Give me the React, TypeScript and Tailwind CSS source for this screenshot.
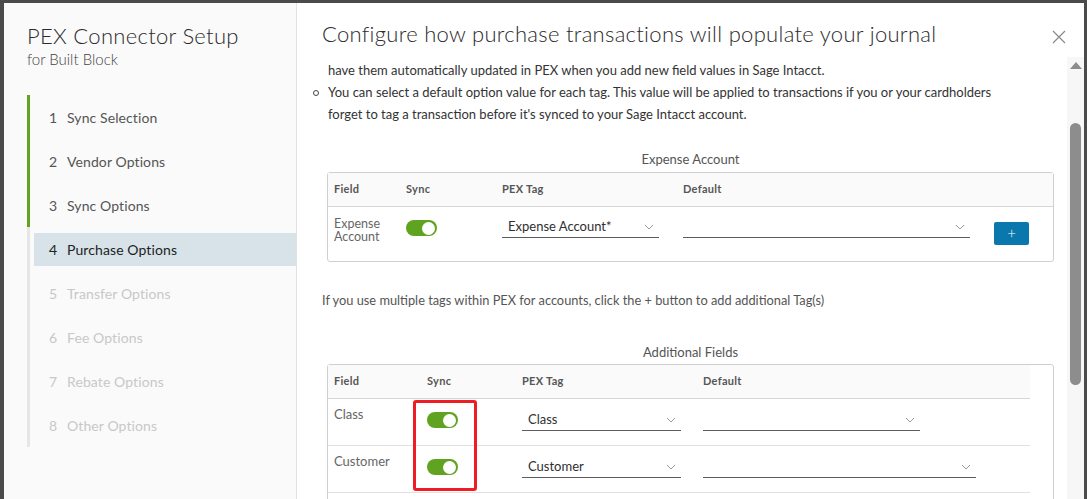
import React from "react";

const steps = [
  { n: 1, label: "Sync Selection", state: "done" },
  { n: 2, label: "Vendor Options", state: "done" },
  { n: 3, label: "Sync Options", state: "done" },
  { n: 4, label: "Purchase Options", state: "active" },
  { n: 5, label: "Transfer Options", state: "todo" },
  { n: 6, label: "Fee Options", state: "todo" },
  { n: 7, label: "Rebate Options", state: "todo" },
  { n: 8, label: "Other Options", state: "todo" },
];

function Chevron() {
  return (
    <svg width="10" height="6" viewBox="0 0 10 6" className="shrink-0">
      <polyline points="1,1 5,5 9,1" fill="none" stroke="#9a9a9a" strokeWidth="1" />
    </svg>
  );
}

function Toggle() {
  return (
    <div className="w-[31px] h-[16px] rounded-full bg-[#5fa321] flex items-center justify-end pr-[2px]">
      <div className="w-[13px] h-[13px] rounded-full bg-white" />
    </div>
  );
}

function Select({ value, w }: { value: string; w: string }) {
  return (
    <div className={`${w} h-[22px] border-b border-[#5c5c5c] flex items-center justify-between pl-[6px] pr-[5px]`}>
      <span className="text-[13px] text-[#2f2f2f] leading-none">{value}</span>
      <Chevron />
    </div>
  );
}

export default function App() {
  return (
    <div className="w-[1087px] h-[499px] bg-[#4b4b4b] pt-[3px] pl-[4px] pr-[3px] overflow-hidden font-['Lato',sans-serif]">
      <div className="flex h-[520px] bg-white">
        {/* Left panel */}
        <aside className="w-[293px] shrink-0 bg-[#fafafa] border-r border-[#e2e2e2] pl-[23px] pt-[20px]">
          <div className="text-[22px] leading-[26px] tracking-[0.3px] text-[#2b2b2b] font-light">PEX Connector Setup</div>
          <div className="text-[15px] leading-[20px] text-[#444] font-light">for Built Block</div>
          <nav className="mt-[26px]">
            {steps.map((s) => (
              <div
                key={s.n}
                className={`h-[44px] flex items-center border-l-[3px] ${
                  s.state === "done" ? "border-[#62a420]" : "border-[#e6e6e6]"
                }`}
              >
                <div
                  className={`ml-[4px] w-full h-[33px] flex items-center pl-[15px] text-[14px] tracking-[0.1px] ${
                    s.state === "active" ? "bg-[#d8e3e9] text-[#222]" : s.state === "done" ? "text-[#555]" : "text-[#c8c8c8]"
                  }`}
                >
                  <span className="w-[18px]">{s.n}</span>
                  <span>{s.label}</span>
                </div>
              </div>
            ))}
          </nav>
        </aside>

        {/* Right panel */}
        <main className="flex-1 min-w-0 flex flex-col">
          <header className="h-[54px] shrink-0 flex items-start justify-between pl-[25px] pr-[18px] pt-[17px]">
            <h1 className="text-[22px] leading-[28px] tracking-[0.3px] text-[#2b2b2b] font-light">
              Configure how purchase transactions will populate your journal
            </h1>
            <svg width="14" height="14" viewBox="0 0 14 14" className="mt-[10px]">
              <path d="M1 1 L13 13 M13 1 L1 13" stroke="#8a8a8a" strokeWidth="1.2" />
            </svg>
          </header>

          <div className="flex-1 flex min-h-0">
            <div className="flex-1 min-w-0 pl-[25px] pr-[13px] pt-[2px] overflow-hidden">
              <div className="text-[13px] leading-[22px] text-[#333] pl-[6px]">
                have them automatically updated in PEX when you add new field values in Sage Intacct.
              </div>
              <div className="flex text-[13px] leading-[22px] text-[#333] ml-[-9px]">
                <span className="w-[15px] shrink-0 pt-[9px]">
                  <span className="block w-[6px] h-[6px] rounded-full border border-[#444]" />
                </span>
                <span>
                  You can select a default option value for each tag. This value will be applied to transactions if you or your cardholders
                  <br />
                  forget to tag a transaction before it's synced to your Sage Intacct account.
                </span>
              </div>

              <div className="mt-[25px] text-center text-[13px] leading-[18px] text-[#555] pl-[5px]">Expense Account</div>

              <div className="mt-[4px] ml-[5px] border border-[#cfcfcf] rounded-[3px]">
                <div className="h-[34px] bg-[#fafafa] border-b border-[#d6d6d6] grid grid-cols-[72px_96px_181px_311px_1fr] items-center pl-[6px] text-[11px] font-bold text-[#565656] tracking-[0.3px]">
                  <span>Field</span>
                  <span>Sync</span>
                  <span>PEX Tag</span>
                  <span>Default</span>
                  <span />
                </div>
                <div className="h-[54px] grid grid-cols-[72px_96px_181px_311px_1fr] items-start pl-[6px] pt-[10px]">
                  <span className="text-[12.5px] leading-[13px] text-[#666]">
                    Expense
                    <br />
                    Account
                  </span>
                  <div className="mt-[3px]">
                    <Toggle />
                  </div>
                  <div className="mt-[-1px]">
                    <Select value="Expense Account*" w="w-[157px]" />
                  </div>
                  <div className="mt-[-1px]">
                    <Select value="" w="w-[287px]" />
                  </div>
                  <button className="mt-[5px] w-[35px] h-[23px] rounded-[2px] bg-[#0a78ac] text-white text-[15px] leading-none font-light flex items-center justify-center">
                    +
                  </button>
                </div>
              </div>

              <div className="mt-[29px] text-[12.8px] leading-[18px] text-[#555]">
                If you use multiple tags within PEX for accounts, click the + button to add additional Tag(s)
              </div>

              <div className="mt-[34px] text-center text-[13px] leading-[18px] text-[#555] pl-[5px]">Additional Fields</div>

              <div className="mt-[3px] ml-[5px] border border-[#cfcfcf] rounded-[3px] relative">
                <div className="w-[702px]">
                  <div className="h-[34px] bg-[#fafafa] border-b border-[#d6d6d6] grid grid-cols-[93px_95px_181px_1fr] items-center pl-[6px] text-[11px] font-bold text-[#565656] tracking-[0.3px]">
                    <span>Field</span>
                    <span>Sync</span>
                    <span>PEX Tag</span>
                    <span>Default</span>
                  </div>
                  <div className="h-[47px] border-b border-[#e0e0e0] grid grid-cols-[93px_95px_181px_1fr] items-start pl-[6px] pt-[7px]">
                    <span className="text-[13px] leading-[16px] text-[#666]">Class</span>
                    <div className="mt-[6px]">
                      <Toggle />
                    </div>
                    <div className="mt-[3px]">
                      <Select value="Class" w="w-[159px]" />
                    </div>
                    <div className="mt-[3px]">
                      <Select value="" w="w-[217px]" />
                    </div>
                  </div>
                  <div className="h-[47px] border-b border-[#e0e0e0] grid grid-cols-[93px_95px_181px_1fr] items-start pl-[6px] pt-[7px]">
                    <span className="text-[13px] leading-[16px] text-[#666]">Customer</span>
                    <div className="mt-[6px]">
                      <Toggle />
                    </div>
                    <div className="mt-[3px]">
                      <Select value="Customer" w="w-[159px]" />
                    </div>
                    <div className="mt-[3px]">
                      <Select value="" w="w-[273px]" />
                    </div>
                  </div>
                  <div className="h-[60px]" />
                </div>
                <div className="absolute left-[85px] top-[35px] w-[64px] h-[91px] border-[3px] border-[#ee1c24] rounded-[3px]" />
              </div>
            </div>

            {/* Scrollbar */}
            <div className="w-[17px] shrink-0 bg-[#f7f7f7] flex flex-col items-center pt-[5px]">
              <svg width="12" height="7" viewBox="0 0 12 7">
                <polygon points="0,7 6,0 12,7" fill="#8c8c8c" />
              </svg>
              <div className="mt-[54px] w-[11px] h-[262px] rounded-full bg-[#8d8d8d]" />
            </div>
          </div>
        </main>
      </div>
    </div>
  );
}
